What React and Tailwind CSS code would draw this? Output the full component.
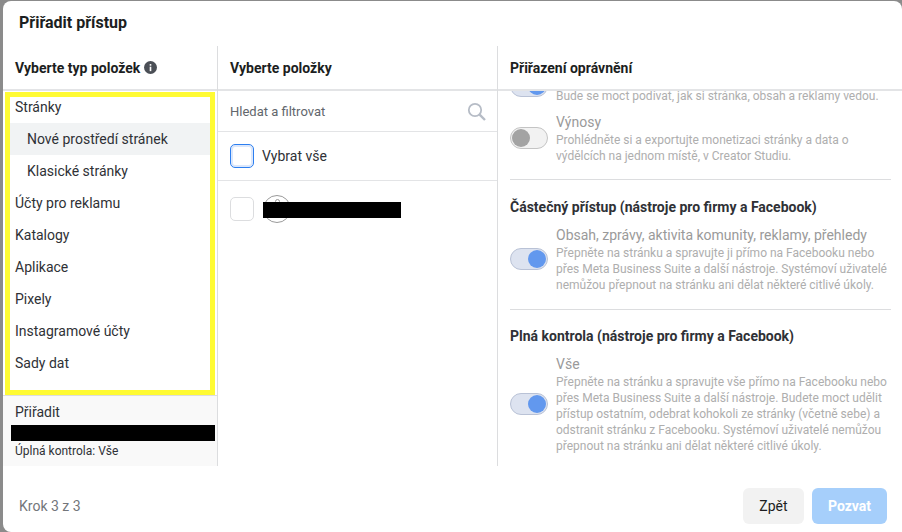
const types = [
  { label: "Stránky" },
  { label: "Nové prostředí stránek", sub: true, active: true },
  { label: "Klasické stránky", sub: true },
  { label: "Účty pro reklamu" },
  { label: "Katalogy" },
  { label: "Aplikace" },
  { label: "Pixely" },
  { label: "Instagramové účty" },
  { label: "Sady dat" },
];

function Toggle({ on }) {
  return (
    <div className={`w-[38px] h-[22px] shrink-0 rounded-full border p-px flex ${on ? "bg-[#dde3f0] border-[#b9c2d6] justify-end" : "bg-[#f2f2f2] border-[#c4c4c4] justify-start"}`}>
      <div className={`w-[18px] h-[18px] rounded-full ${on ? "bg-[#6298ee]" : "bg-[#a3a3a3]"}`} />
    </div>
  );
}

function Permission({ title, lines, on, className = "" }) {
  return (
    <div className={`flex items-center gap-2 ${className}`}>
      <Toggle on={on} />
      <div>
        <p className="text-sm leading-5 text-[#9a9a9a]">{title}</p>
        {lines.map((l) => (
          <p key={l} className="text-xs leading-[16px] text-[#aeaeae] whitespace-nowrap">{l}</p>
        ))}
      </div>
    </div>
  );
}

function ColHeader({ children }) {
  return (
    <div className="h-[45px] shrink-0 flex items-center gap-1 border-b-2 border-[#e3e4e6] text-sm font-bold text-[#1c1e21]">
      {children}
    </div>
  );
}

export default function App() {
  return (
    <div className="w-[902px] h-[532px] overflow-hidden bg-[#8b8b8b] pl-[3px] pt-px font-['Roboto',sans-serif]">
      <div className="w-[899px] h-[531px] bg-white rounded-tl-lg rounded-tr-lg rounded-bl-lg flex flex-col">
        <div className="h-[45px] shrink-0 pl-4 pt-3 text-base leading-5 font-bold text-[#1c1e21]">Přiřadit přístup</div>

        <div className="h-[420px] flex">
          <div className="w-[215px] shrink-0 flex flex-col border-r border-[#dcdddf]">
            <ColHeader><span className="pl-3">Vyberte typ položek</span>
              <svg width="13" height="13" viewBox="0 0 16 16">
                <circle cx="8" cy="8" r="8" fill="#4b4f56" />
                <rect x="7" y="7" width="2" height="5.5" fill="#fff" />
                <rect x="7" y="3.8" width="2" height="2" fill="#fff" />
              </svg>
            </ColHeader>
            <div className="relative h-[304px] shrink-0">
              <div className="absolute left-[2px] right-[2px] top-px bottom-0 border-[5px] border-[#fffb33] pointer-events-none z-10" />
              {types.map((t) => (
                <div key={t.label} className={`h-8 flex items-center text-sm text-[#2f3136] ${t.sub ? "pl-6" : "pl-3"} ${t.active ? "bg-[#f1f3f4] mx-[7px] !pl-[17px]" : ""}`}>
                  {t.label}
                </div>
              ))}
            </div>
            <div className="relative z-20 flex-1 bg-[#f9f9f9] border-t border-[#dcdddf] pl-3 pt-[7px]">
              <p className="text-sm leading-[18px] text-[#2f3136]">Přiřadit</p>
              <div className="h-4 bg-black -ml-1 mt-1 w-[204px]" />
              <p className="text-xs leading-4 mt-[2px] text-[#2f3136]">Úplná kontrola: Vše</p>
            </div>
          </div>

          <div className="w-[280px] shrink-0 flex flex-col border-r border-[#dcdddf]">
            <ColHeader><span className="pl-3">Vyberte položky</span></ColHeader>
            <div className="h-[41px] shrink-0 flex items-center justify-between pl-3 pr-[11px] pt-px border-b border-[#e3e4e6]">
              <span className="text-[13px] text-[#62666c]">Hledat a filtrovat</span>
              <svg width="19" height="19" viewBox="0 0 19 19" fill="none" stroke="#b6bcc6" strokeWidth="1.8">
                <circle cx="8" cy="8" r="6.2" />
                <path d="M12.6 12.6 18 18" strokeWidth="2.4" />
              </svg>
            </div>
            <div className="h-[49px] shrink-0 flex items-center gap-2 pl-3 border-b border-[#e3e4e6]">
              <div className="w-6 h-6 rounded-[5px] border border-[#2d7ff0] shadow-[inset_0_0_0_2px_#dbe7fb]" />
              <span className="text-sm text-[#2f3136]">Vybrat vše</span>
            </div>
            <div className="relative h-14 flex items-center pl-3">
              <div className="w-6 h-6 rounded-[5px] border border-[#dcdddf]" />
              <div className="ml-[9px] w-7 h-7 rounded-full border border-[#9a9a9a] flex justify-center pt-[3px]">
                <div className="w-[5px] h-[5px] rounded-full border border-[#9a9a9a]" />
              </div>
              <div className="absolute left-[45px] top-[21px] w-[138px] h-4 bg-black" />
            </div>
          </div>

          <div className="flex-1 flex flex-col min-w-0">
            <ColHeader><span className="pl-3">Přiřazení oprávnění</span></ColHeader>
            <div className="flex-1 overflow-hidden pl-3 pr-[11px]">
              <div className="-mt-[16px]">
                <div className="flex items-start gap-2">
                  <Toggle on />
                  <p className="mt-[13px] text-xs leading-[16px] text-[#aeaeae] whitespace-nowrap">Bude se moct podívat, jak si stránka, obsah a reklamy vedou.</p>
                </div>
                <Permission title="Výnosy" lines={["Prohlédněte si a exportujte monetizaci stránky a data o", "výdělcích na jednom místě, v Creator Studiu."]} className="mt-2" />
                <div className="mt-[15px] border-t border-[#dcdddf]" />
                <p className="mt-[18px] text-sm leading-[18px] font-bold text-[#2f3136]">Částečný přístup (nástroje pro firmy a Facebook)</p>
                <Permission on title="Obsah, zprávy, aktivita komunity, reklamy, přehledy" lines={["Přepněte na stránku a spravujte ji přímo na Facebooku nebo", "přes Meta Business Suite a další nástroje. Systémoví uživatelé", "nemůžou přepnout na stránku ani dělat některé citlivé úkoly."]} className="mt-[9px]" />
                <div className="mt-4 border-t border-[#dcdddf]" />
                <p className="mt-[17px] text-sm leading-[18px] font-bold text-[#2f3136]">Plná kontrola (nástroje pro firmy a Facebook)</p>
                <Permission on title="Vše" lines={["Přepněte na stránku a spravujte vše přímo na Facebooku nebo", "přes Meta Business Suite a další nástroje. Budete moct udělit", "přístup ostatním, odebrat kohokoli ze stránky (včetně sebe) a", "odstranit stránku z Facebooku. Systémoví uživatelé nemůžou", "přepnout na stránku ani dělat některé citlivé úkoly."]} className="mt-[9px]" />
              </div>
            </div>
          </div>
        </div>

        <div className="flex-1 flex items-center justify-between pl-4 pr-[15px] pt-[13px]">
          <span className="text-sm text-[#73767b]">Krok 3 z 3</span>
          <div className="flex gap-2">
            <button className="w-[61px] h-9 rounded-md bg-[#f2f2f2] text-sm font-normal text-[#1c1e21]">Zpět</button>
            <button className="w-[75px] h-9 rounded-md bg-[#a6cffb] text-sm font-bold text-white">Pozvat</button>
          </div>
        </div>
      </div>
    </div>
  );
}
